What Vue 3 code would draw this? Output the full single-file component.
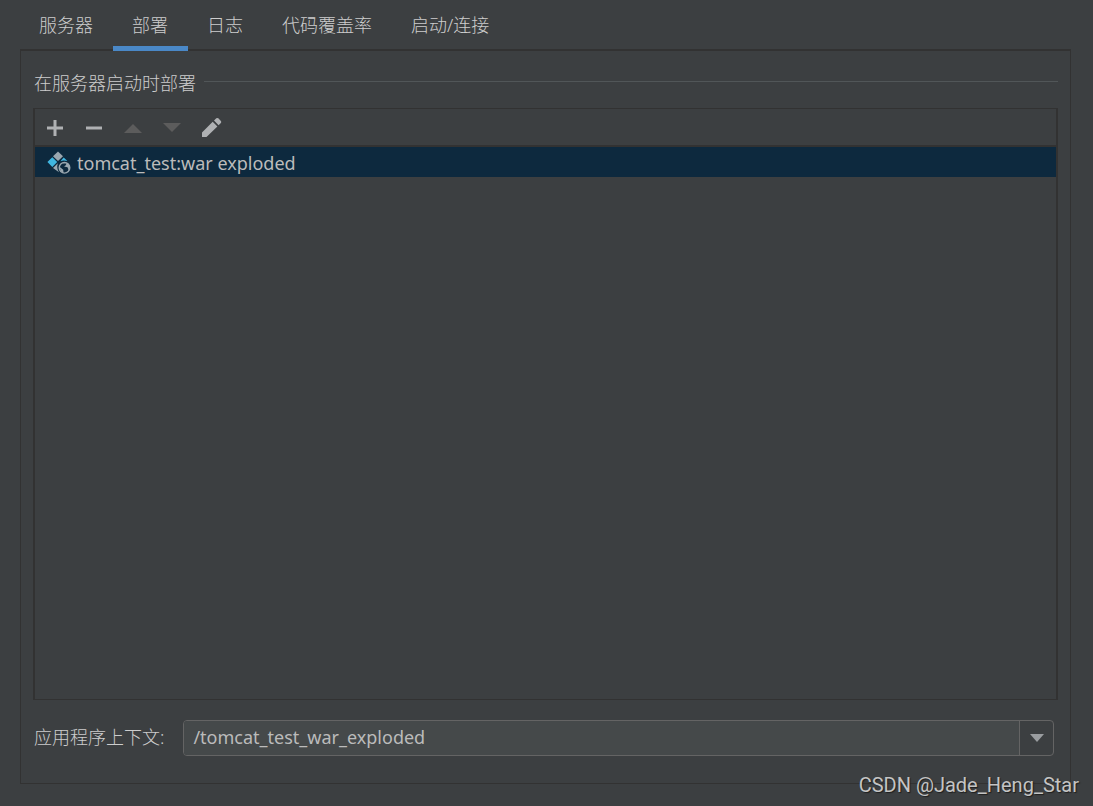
<script setup>
import { ref } from 'vue'

const tabs = ['服务器', '部署', '日志', '代码覆盖率', '启动/连接']
const active = ref('部署')
const context = ref('/tomcat_test_war_exploded')
</script>

<template>
  <main class="page">
    <nav class="tabs" role="tablist">
      <button
        v-for="tab in tabs"
        :key="tab"
        class="tab"
        :class="{ active: tab === active }"
        role="tab"
        type="button"
        :aria-selected="tab === active"
        @click="active = tab"
      >{{ tab }}</button>
    </nav>

    <section class="panel">
      <h2 class="heading"><span>在服务器启动时部署</span></h2>

      <div class="artifacts">
        <div class="toolbar">
          <button class="tool" type="button" aria-label="添加">
            <svg viewBox="0 0 24 24"><path d="M10.500 4h3v6.500H20v3h-6.500V20h-3v-6.500H4v-3h6.500z" fill="#afb1b3" /></svg>
          </button>
          <button class="tool" type="button" aria-label="移除">
            <svg viewBox="0 0 24 24"><path d="M4 10.500h16v3H4z" fill="#afb1b3" /></svg>
          </button>
          <button class="tool" type="button" aria-label="上移" disabled>
            <svg viewBox="0 0 24 24"><path d="M3 17l9-9 9 9z" fill="#5c5c5c" /></svg>
          </button>
          <button class="tool" type="button" aria-label="下移" disabled>
            <svg viewBox="0 0 24 24"><path d="M3 7h18l-9 9z" fill="#5c5c5c" /></svg>
          </button>
          <button class="tool" type="button" aria-label="编辑">
            <svg viewBox="0 0 24 24"><path d="M3 16.500L13.700 5.800l4.700 4.700L7.500 21H3zM15 4.500l2.300-2.200q1-.8 2 0l2.600 2.600q.8 1 0 2L19.600 9.200z" fill="#afb1b3" /></svg>
          </button>
        </div>
        <ul class="list">
          <li class="row">
            <svg class="artifact" viewBox="0 0 24 24" aria-hidden="true">
              <path d="M11 .5l5 4.800-5 4.800-5-4.800z" fill="#9aa7b0" />
              <path d="M5.300 6.200l4.900 4.900-4.900 4.900-4.900-4.900zM16.700 6.400l3.700 3.700q-4-1.500-7 .2z" fill="#40b6e0" />
              <path d="M10.800 12.200q-1.500 5 1.200 9l-6-4.300z" fill="#9aa7b0" />
              <circle cx="17.500" cy="16.800" r="5.300" fill="#0d293e" stroke="#9aa7b0" stroke-width="1.400" />
              <path d="M12.200 15.500l4 3.200.3 2.800-2.500-1zM15 12.500l3-.8 1.500 1-1 1.700-1.500 1.200 3.500.6 1 2.300-.8 2 2-2.500v-3l-2-3z" fill="#9aa7b0" />
            </svg>
            <span>tomcat_test:war exploded</span>
          </li>
        </ul>
      </div>

      <div class="context">
        <label for="context">应用程序上下文:</label>
        <div class="combo">
          <input id="context" v-model="context" type="text" spellcheck="false" />
          <button type="button" aria-label="展开">
            <svg viewBox="0 0 14 8"><path d="M0 0h14L7 8z" fill="#9a9da0" /></svg>
          </button>
        </div>
      </div>
    </section>
    <p class="credit">CSDN @Jade_Heng_Star</p>
  </main>
</template>

<style>
body {
  background: #3c3f41;
}
</style>

<style scoped>
* {
  box-sizing: border-box;
}
.page {
  position: relative;
  display: flex;
  flex-direction: column;
  min-height: 100vh;
  padding: 0 22px 22px 20px;
  background: #3c3f41;
  color: #bbbbbb;
  font: 18px/24px "Noto Sans", "Noto Sans CJK SC", sans-serif;
}
button,
input {
  font: inherit;
  color: inherit;
  border: 0;
  margin: 0;
  background: transparent;
}
.tabs {
  z-index: 1;
  display: flex;
  height: 51px;
  margin-bottom: -2px;
}
.tab {
  padding: 4px 20px 0 19px;
  border-bottom: 5px solid transparent;
}
.tab,
.heading,
.context label {
  font-weight: 300;
  color: #cdcdcd;
}
.tab.active {
  border-bottom-color: #4a88c7;
}
.panel {
  flex: 1;
  display: flex;
  flex-direction: column;
  padding: 16px 12px 27px 12px;
  border: 1px solid #323232;
  border-top-width: 2px;
}
.heading {
  display: flex;
  align-items: center;
  gap: 8px;
  margin: 0 0 13px 1px;
  font-size: 18px;
}
.heading span {
  padding-top: 4px;
}
.heading::after {
  content: "";
  flex: 1;
  height: 1px;
  background: #515658;
}
.artifacts {
  flex: 1;
  border: 1px solid #323232;
  border-width: 1px 2px;
}
.toolbar {
  display: flex;
  align-items: center;
  gap: 15px;
  height: 38px;
  padding: 2px 0 0 8px;
  border-bottom: 2px solid #323232;
}
.tool {
  width: 24px;
  height: 24px;
  padding: 0;
}
.tool svg,
.combo svg {
  display: block;
}
.list {
  margin: 0;
  padding: 0;
  list-style: none;
}
.row {
  display: flex;
  align-items: center;
  gap: 6px;
  height: 30px;
  padding: 2px 12px 0;
  background: #0d293e;
}
.artifact {
  width: 24px;
  height: 24px;
}
.context {
  display: flex;
  align-items: center;
  gap: 19px;
  margin: 20px 4px 0 1px;
}
.context label {
  padding-bottom: 2px;
}
.combo {
  flex: 1;
  display: flex;
  height: 36px;
  border: 1px solid #646464;
  border-radius: 4px;
  overflow: hidden;
}
.combo input {
  flex: 1;
  min-width: 0;
  padding: 0 9px 2px;
  background: #45494a;
}
.combo button {
  display: grid;
  place-items: center;
  width: 34px;
  padding: 0;
  border-left: 1px solid #646464;
}
.combo svg {
  width: 14px;
  height: 8px;
}
.credit {
  position: absolute;
  right: 14px;
  bottom: 9px;
  margin: 0;
  font: 20px/24px Roboto, "Liberation Sans", sans-serif;
  color: #c4c4c4;
  text-shadow: 1px 1px 1px #1e1e1e;
}
</style>
